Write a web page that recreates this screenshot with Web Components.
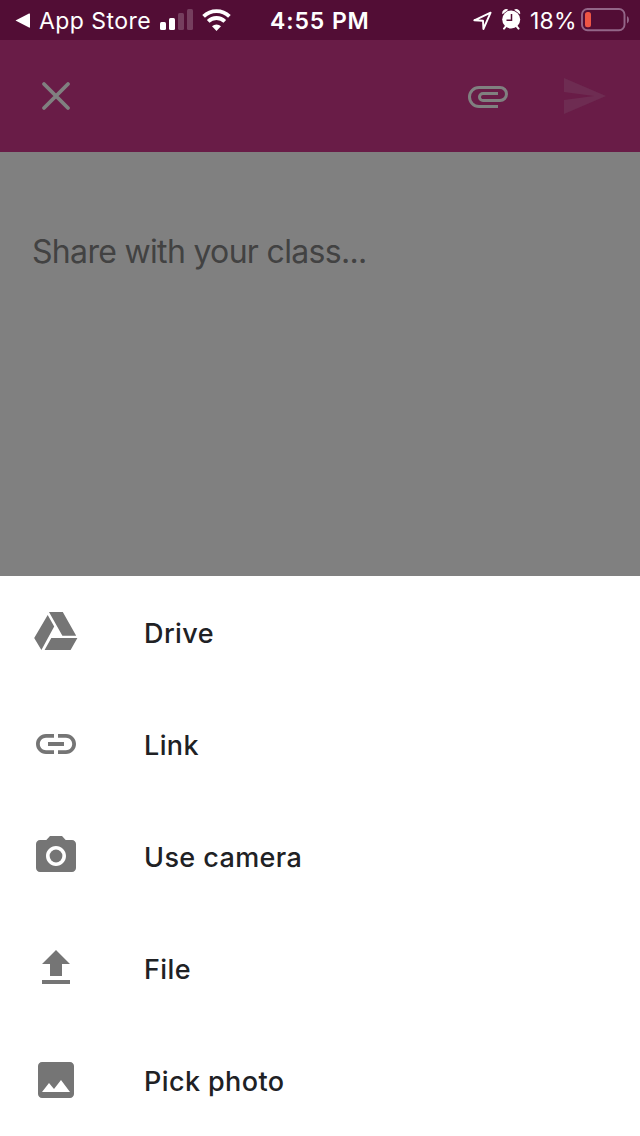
<!DOCTYPE html>
<html lang="en">
<head>
<meta charset="utf-8">
<title>Share with your class</title>
<style>
  body { margin: 0; background: #fff; font-family: Inter, "Liberation Sans", sans-serif; }
</style>
</head>
<body>
<class-composer></class-composer>

<script>
const ICONS = {
  close: '<path d="M6 6L18 18M18 6L6 18" fill="none" stroke="currentColor" stroke-width="1.9" stroke-linecap="round"/>',
  attachment: '<path d="M17 17.25H7.5a4.75 4.75 0 0 1 0-9.5H18a3.25 3.25 0 0 1 0 6.5H9.5a1.75 1.75 0 0 1 0-3.5H17" fill="none" stroke="currentColor" stroke-width="1.5"/>',
  send: '<path d="M2 21L23 12 2 3v7l15 2-15 2z"/>',
  drive: '<path d="M8.5 2H15.4L22.1 13.85H15.2zM7.85 3.5L11.1 9.3 4.7 21 1.1 15zM9.65 15H22.7L19.3 21H6.3z"/>',
  link: '<path d="M3.9 12c0-1.71 1.39-3.1 3.1-3.1h4V7H7c-2.76 0-5 2.24-5 5s2.24 5 5 5h4v-1.9H7c-1.71 0-3.1-1.39-3.1-3.1zM8 13h8v-2H8v2zm9-6h-4v1.9h4c1.71 0 3.1 1.39 3.1 3.1s-1.39 3.1-3.1 3.1h-4V17h4c2.76 0 5-2.24 5-5s-2.24-5-5-5z"/>',
  camera: '<circle cx="12" cy="12" r="3.2"/><path d="M9 2L7.17 4H4c-1.1 0-2 .9-2 2v12c0 1.1.9 2 2 2h16c1.1 0 2-.9 2-2V6c0-1.1-.9-2-2-2h-3.17L15 2H9zm3 15c-2.76 0-5-2.24-5-5s2.24-5 5-5 5 2.24 5 5-2.24 5-5 5z"/>',
  upload: '<path d="M9 16h6v-6h4l-7-7-7 7h4zm-4 2h14v2H5z"/>',
  photo: '<path d="M21 19V5c0-1.1-.9-2-2-2H5c-1.1 0-2 .9-2 2v14c0 1.1.9 2 2 2h14c1.1 0 2-.9 2-2zM8.5 13.5l2.5 3.01L14.5 12l4.5 6H5l3.5-4.5z"/>'
};

class GlyphIcon extends HTMLElement {
  constructor() {
    super();
    this.attachShadow({ mode: 'open' });
  }

  connectedCallback() {
    this.shadowRoot.innerHTML = `
      <style>
        :host{display:block; flex:none; width:48px; height:48px}
        svg{display:block; fill:currentColor}
      </style>
      <svg width="48" height="48" viewBox="0 0 24 24" aria-hidden="true">${ICONS[this.getAttribute('name')] || ''}</svg>
    `;
  }
}

class StatusBar extends HTMLElement {
  constructor() {
    super();
    this.attachShadow({ mode: 'open' });
    this.shadowRoot.innerHTML = `
      <style>
        :host{
          display:grid;
          grid-template-columns:39px 121px 42px 68px 203px 29px 28px 51px 59px;
          height:40px;
          background:#520d35;
          color:#fff;
          font-size:23px;
          line-height:42px;
          white-space:nowrap;
        }
        svg{display:block}
        .app{letter-spacing:.45px}
        .time{font-weight:600; letter-spacing:.9px}
        .level{letter-spacing:.2px}
      </style>
      <svg width="39" height="40"><path d="M15.500 20.500L29 13.600Q30 13.200 30 14.200V27Q30 28 29 27.500z" fill="#fff"/></svg>
      <span class="app">App Store</span>
      <svg width="42" height="40" fill="#fff">
        <rect y="22" width="6" height="8" rx="1.5"/>
        <rect x="9" y="18" width="6" height="12" rx="1.5"/>
        <g opacity=".2">
          <rect x="18" y="13" width="6" height="17" rx="1.5"/>
          <rect x="27" y="9" width="6" height="21" rx="1.5"/>
        </g>
      </svg>
      <svg width="68" height="40" fill="none" stroke="#fff" stroke-width="3.8">
        <path d="M1.600 16.400A18.500 18.500 0 0 1 27.400 16.400M6.200 21.400A11.800 11.800 0 0 1 22.800 21.400"/>
        <path d="M14.500 31L10 26.300A6.500 6.500 0 0 1 19 26.300z" fill="#fff" stroke="none"/>
      </svg>
      <span class="time">4:55 PM</span>
      <svg width="29" height="40"><path d="M1.300 20.300L17.600 12.700 10.400 29 10 20.700z" fill="none" stroke="#fff" stroke-width="1.900" stroke-linejoin="round"/></svg>
      <svg width="28" height="40">
        <path d="M4 26.200L2 28.600M14.500 26.200L16.500 28.600" stroke="#fff" stroke-width="2" stroke-linecap="round"/>
        <path d="M.4 14.300A4 4 0 0 1 6.300 9.700zM18 14.300A4 4 0 0 0 12.100 9.700z" fill="#fff"/>
        <circle cx="9.200" cy="19.500" r="9" fill="#fff"/>
        <path d="M9.500 14V20.200H4.500" fill="none" stroke="#520d35" stroke-width="1.500"/>
      </svg>
      <span class="level">18%</span>
      <svg width="59" height="40">
        <rect x="1" y="9" width="42.500" height="21.300" rx="5.500" fill="none" stroke="#936688" stroke-width="1.900"/>
        <rect x="4" y="12" width="6" height="15.300" rx="2.500" fill="#ee5545"/>
        <path d="M46 16Q48 17 48 19.700T46 23.400z" fill="#936688"/>
      </svg>
    `;
  }
}

class ComposerToolbar extends HTMLElement {
  constructor() {
    super();
    this.attachShadow({ mode: 'open' });
    this.shadowRoot.innerHTML = `
      <style>
        :host{
          display:flex;
          align-items:center;
          gap:48px;
          height:112px;
          padding:0 32px;
          box-sizing:border-box;
          background:#691c47;
          color:#808080;
        }
        .close{margin-right:auto}
        .send{color:#6e2c52}
      </style>
      <glyph-icon class="close" name="close"></glyph-icon>
      <glyph-icon name="attachment"></glyph-icon>
      <glyph-icon class="send" name="send"></glyph-icon>
    `;
  }
}

class SheetItem extends HTMLElement {
  constructor() {
    super();
    this.attachShadow({ mode: 'open' });
  }

  connectedCallback() {
    this.shadowRoot.innerHTML = `
      <style>
        :host{
          display:flex;
          align-items:center;
          gap:64px;
          height:112px;
          padding-left:32px;
          box-sizing:border-box;
          color:#202124;
          font-size:27px;
          font-weight:460;
        }
        glyph-icon{color:#757575}
        .label{line-height:34px; padding-top:4px; letter-spacing:.4px}
      </style>
      <glyph-icon name="${this.getAttribute('icon')}"></glyph-icon>
      <span class="label"><slot></slot></span>
    `;
  }
}

class ClassComposer extends HTMLElement {
  constructor() {
    super();
    this.attachShadow({ mode: 'open' });
    this.shadowRoot.innerHTML = `
      <style>
        :host{display:flex; flex-direction:column; height:1136px; overflow:hidden}
        .message{
          flex:1;
          padding:80px 32px 0;
          background:#808080;
          color:#424242;
          font-size:32px;
          line-height:40px;
          letter-spacing:-.68px;
        }
        .sheet{background:#fff}
      </style>
      <status-bar></status-bar>
      <composer-toolbar></composer-toolbar>
      <div class="message"><span>Share with your class...</span></div>
      <div class="sheet">
        <sheet-item icon="drive">Drive</sheet-item>
        <sheet-item icon="link">Link</sheet-item>
        <sheet-item icon="camera">Use camera</sheet-item>
        <sheet-item icon="upload">File</sheet-item>
        <sheet-item icon="photo">Pick photo</sheet-item>
      </div>
    `;
  }
}

customElements.define('glyph-icon', GlyphIcon);
customElements.define('status-bar', StatusBar);
customElements.define('composer-toolbar', ComposerToolbar);
customElements.define('sheet-item', SheetItem);
customElements.define('class-composer', ClassComposer);
</script>
</body>
</html>
